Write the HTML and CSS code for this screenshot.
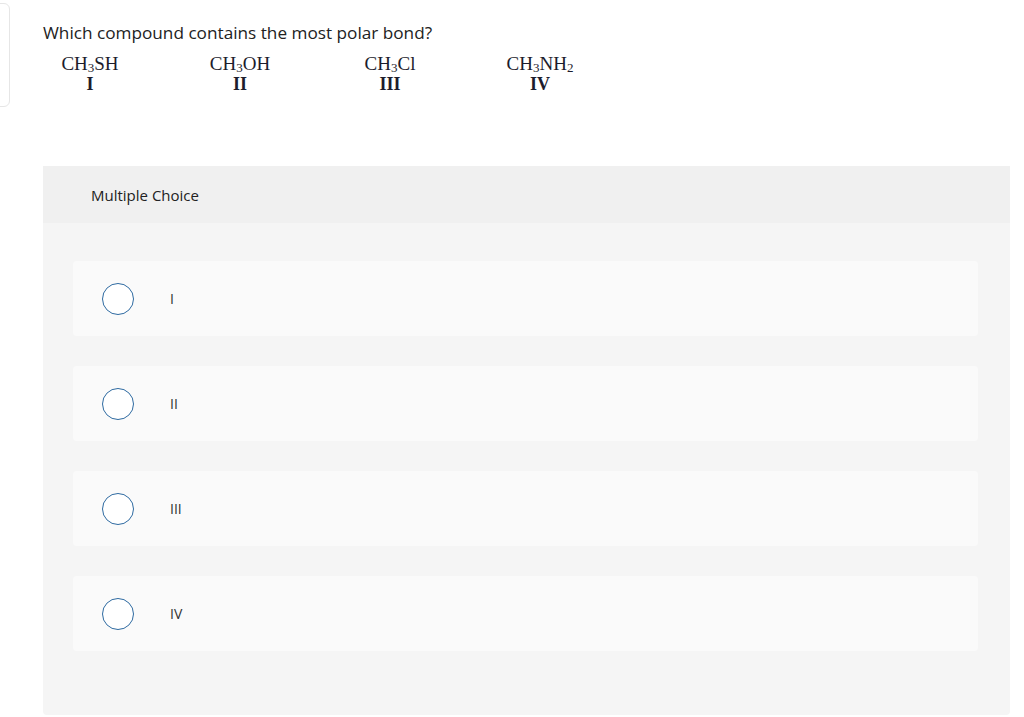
FILE: index.html
```html
<!DOCTYPE html>
<html>
<head>
<meta charset="utf-8">
<link rel="stylesheet" href="styles.css">
</head>
<body>
<div class="page">
  <div class="side-card"></div>
  <main class="main">
    <p class="question">Which compound contains the most polar bond?</p>
    <div class="formulas">
      <div class="formula"><span class="f">CH<sub>3</sub>SH</span><span class="num">I</span></div>
      <div class="formula"><span class="f">CH<sub>3</sub>OH</span><span class="num">II</span></div>
      <div class="formula"><span class="f">CH<sub>3</sub>Cl</span><span class="num">III</span></div>
      <div class="formula"><span class="f">CH<sub>3</sub>NH<sub>2</sub></span><span class="num">IV</span></div>
    </div>
    <section class="mc">
      <div class="mc-head">Multiple Choice</div>
      <div class="mc-body">
        <label class="option"><span class="radio"></span><span class="opt-text">I</span></label>
        <label class="option"><span class="radio"></span><span class="opt-text">II</span></label>
        <label class="option"><span class="radio"></span><span class="opt-text">III</span></label>
        <label class="option"><span class="radio"></span><span class="opt-text">IV</span></label>
      </div>
    </section>
  </main>
</div>
</body>
</html>
```
FILE: styles.css
```css
* { box-sizing: border-box; }
html, body { margin: 0; padding: 0; background: #fff; }
body { font-family: "Open Sans", "Liberation Sans", sans-serif; color: #222; width: 1024px; height: 717px; overflow: hidden; }
.page { display: flex; align-items: flex-start; }
.side-card {
  width: 30px; height: 104px; margin-left: -20px; margin-top: 3px;
  border: 1px solid #e6e6e6; border-radius: 6px; flex: none;
}
.main { margin-left: 33px; width: 967px; }
.question { margin: 22px 0 0 0; font-size: 17.2px; line-height: 22px; color: #222; }
.formulas { display: flex; margin-top: 10px; }
.formula {
  display: flex; flex-direction: column; align-items: center;
  font-family: "Liberation Serif", "Times New Roman", serif; color: #1c1c2c;
  width: 150px; margin-left: -28px;
}
.formula:first-child { margin-left: -28px; }
.formula + .formula { margin-left: 0; }
.f { font-size: 19px; line-height: 20px; }
.f sub { font-size: 13px; vertical-align: 0; position: relative; top: 2px; line-height: 0; }
.num { font-weight: bold; font-size: 18px; line-height: 18px; margin-top: 1px; }
.mc { margin-top: 73px; background: #f5f5f5; border-radius: 0 0 4px 4px; }
.mc-head { background: #f0f0f0; height: 57px; display: flex; align-items: center; padding-left: 48px; font-size: 15px; color: #222; }
.mc-body { padding: 38px 32px 64px 30px; display: flex; flex-direction: column; gap: 30px; }
.option {
  display: flex; align-items: center; height: 75px; background: #fafafa;
  border-radius: 4px; padding-left: 29px;
}
.radio { width: 32px; height: 32px; border: 1.5px solid #2e6aa1; border-radius: 50%; background: #fff; flex: none; }
.opt-text { margin-left: 36px; font-size: 14px; color: #333; }
```
